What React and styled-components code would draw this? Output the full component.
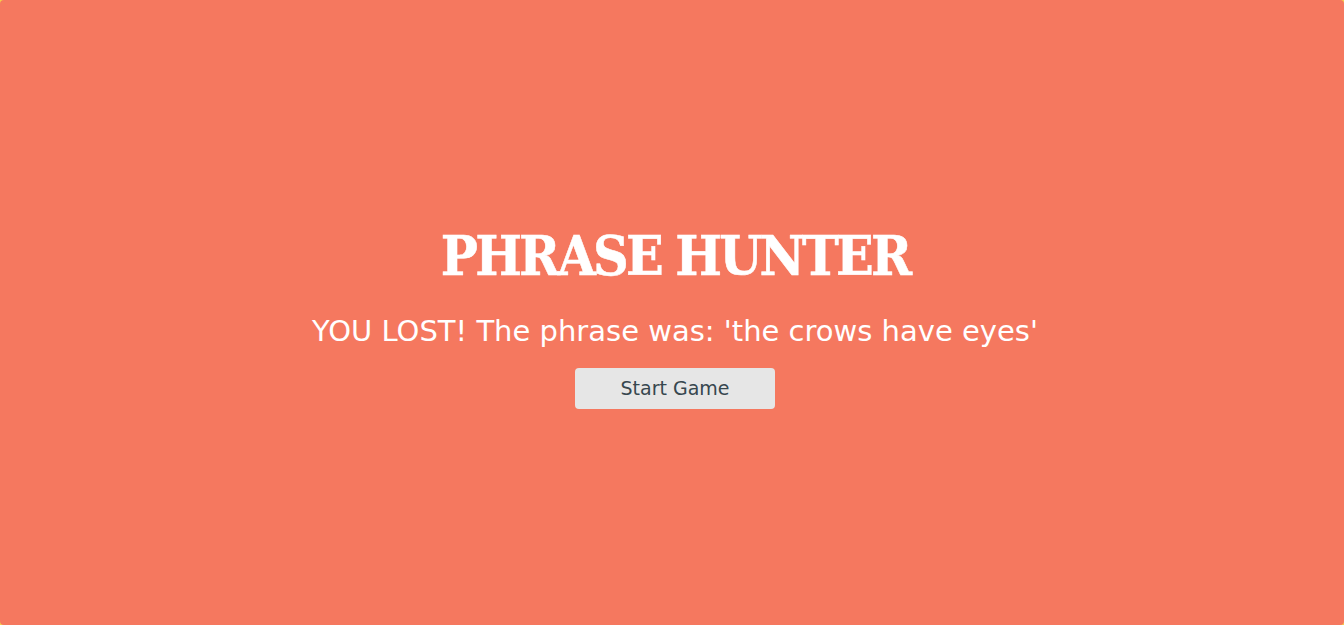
import React from "react";
import styled, { createGlobalStyle } from "styled-components";

const Global = createGlobalStyle`
  html, body { margin: 0; padding: 0; background: #f5d04a; }
  #root { height: 100vh; }
`;

const Overlay = styled.div`
  box-sizing: border-box;
  height: 625px;
  padding: 5px 0 0 6px;
  background: #f5785f;
  border-radius: 4px;
  display: flex;
  flex-direction: column;
  align-items: center;
  justify-content: center;
  color: #fff;
`;

const Title = styled.h2`
  margin: 0;
  font-family: "DejaVu Serif", serif;
  font-weight: 700;
  font-stretch: condensed;
  font-size: 55px;
  line-height: 67px;
  letter-spacing: -2.8px;
  text-transform: uppercase;
  -webkit-text-stroke: 0.5px #fff;
`;

const Message = styled.h1`
  margin: 23px 0 0;
  font-family: "DejaVu Sans", sans-serif;
  font-weight: 400;
  font-size: 29px;
  line-height: 38px;
`;

const Button = styled.button`
  margin-top: 18px;
  width: 200px;
  height: 41px;
  border: none;
  border-radius: 4px;
  background: #e6e6e6;
  color: #37474f;
  font-family: "DejaVu Sans", sans-serif;
  font-weight: 400;
  font-size: 19px;
  cursor: pointer;
`;

export default function App() {
  return (
    <>
      <Global />
      <Overlay>
        <Title>Phrase Hunter</Title>
        <Message>YOU LOST! The phrase was: 'the crows have eyes'</Message>
        <Button>Start Game</Button>
      </Overlay>
    </>
  );
}
